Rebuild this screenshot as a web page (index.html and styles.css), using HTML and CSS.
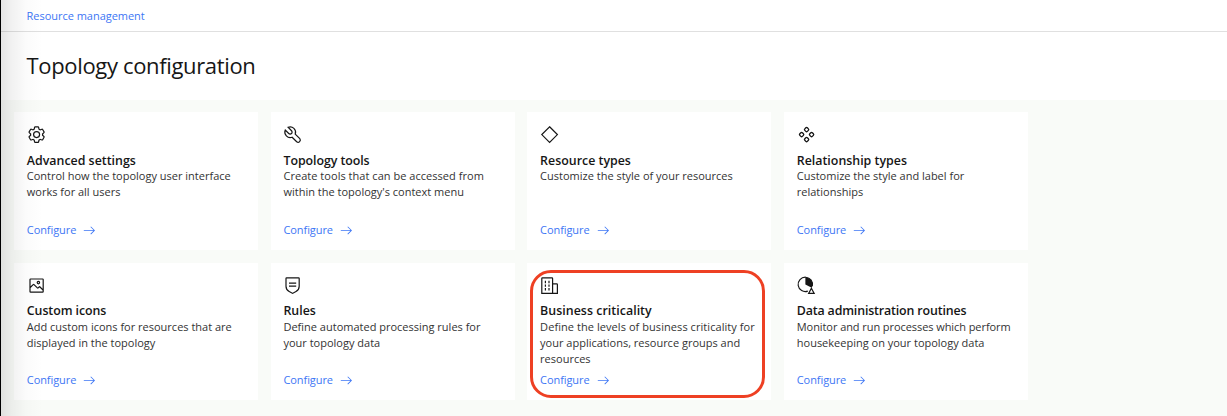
FILE: index.html
```
<!DOCTYPE html>
<html lang="en">
<head>
<meta charset="utf-8">
<title>Topology configuration</title>
<link rel="stylesheet" href="styles.css">
</head>
<body>
<svg class="defs" width="0" height="0"><defs><symbol id="arrow" viewBox="0 0 16 16"><path d="M9.3 3.7 13.1 7.5H1v1h12.1L9.3 12.3 10 13l5-5-5-5z"/></symbol></defs></svg>
<div class="page">
<header class="header">
<nav class="crumbs"><a class="link crumb">Resource management</a></nav>
<h1 class="title">Topology configuration</h1>
</header>
<main class="grid">
<section class="card">
<svg class="icon" viewBox="0 0 32 32"><path d="M27,16.76c0-.25,0-.5,0-.76s0-.51,0-.77l1.92-1.68A2,2,0,0,0,29.3,11L26.94,7a2,2,0,0,0-1.73-1,2,2,0,0,0-.64.1l-2.43.82a11.35,11.35,0,0,0-1.31-.75l-.51-2.52a2,2,0,0,0-2-1.61H13.64a2,2,0,0,0-2,1.61l-.51,2.52a11.48,11.48,0,0,0-1.32.75L7.43,6.06A2,2,0,0,0,6.79,6,2,2,0,0,0,5.06,7L2.7,11a2,2,0,0,0,.41,2.51L5,15.24c0,.25,0,.5,0,.76s0,.51,0,.77L3.11,18.45A2,2,0,0,0,2.7,21L5.06,25a2,2,0,0,0,1.73,1,2,2,0,0,0,.64-.1l2.43-.82a11.35,11.35,0,0,0,1.31.75l.51,2.52a2,2,0,0,0,2,1.61h4.72a2,2,0,0,0,2-1.61l.51-2.52a11.48,11.48,0,0,0,1.32-.75l2.42.82a2,2,0,0,0,.64.1,2,2,0,0,0,1.73-1L29.3,21a2,2,0,0,0-.41-2.51ZM25.21,24l-3.43-1.16a8.86,8.86,0,0,1-2.71,1.57L18.36,28H13.64l-.71-3.55a9.36,9.36,0,0,1-2.7-1.57L6.79,24,4.43,20l2.72-2.4a8.9,8.9,0,0,1,0-3.13L4.43,12,6.79,8l3.43,1.16a8.86,8.86,0,0,1,2.71-1.57L13.64,4h4.72l.71,3.55a9.36,9.36,0,0,1,2.7,1.57L25.21,8,27.57,12l-2.72,2.4a8.9,8.9,0,0,1,0,3.13L27.57,20Z"/><circle class="line" cx="16" cy="16" r="5"/></svg>
<h2 class="name">Advanced settings</h2>
<p class="text"><span class="row">Control how the topology user interface</span> <span class="row">works for all users</span></p>
<a class="link action"><span class="label">Configure</span><svg class="arrow"><use href="#arrow"/></svg></a>
</section>
<section class="card">
<svg class="icon" viewBox="0 0 32 32"><path class="line" d="M8.5 3.8A9 9 0 0 1 20.4 15.2L28 22.8a3.7 3.7 0 0 1-5.2 5.2L15.2 20.4A9 9 0 0 1 3.8 8.5L9.6 14.2A3.25 3.25 0 0 0 14.2 9.6Z"/></svg>
<h2 class="name snug">Topology tools</h2>
<p class="text"><span class="row loose">Create tools that can be accessed from</span> <span class="row">within the topology's context menu</span></p>
<a class="link action"><span class="label">Configure</span><svg class="arrow"><use href="#arrow"/></svg></a>
</section>
<section class="card">
<svg class="icon" viewBox="0 0 32 32"><path class="line" d="M16 3 29 16 16 29 3 16Z"/></svg>
<h2 class="name">Resource types</h2>
<p class="text"><span class="row">Customize the style of your resources</span></p>
<a class="link action"><span class="label">Configure</span><svg class="arrow"><use href="#arrow"/></svg></a>
</section>
<section class="card">
<svg class="icon" viewBox="0 0 32 32"><g class="line nodes"><rect x="13" y="4.7" width="6" height="6" rx="1.8" transform="rotate(45 16 7.7)"/><rect x="4.7" y="13" width="6" height="6" rx="1.8" transform="rotate(45 7.7 16)"/><rect x="21.3" y="13" width="6" height="6" rx="1.8" transform="rotate(45 24.3 16)"/><rect x="13" y="21.3" width="6" height="6" rx="1.8" transform="rotate(45 16 24.3)"/></g></svg>
<h2 class="name">Relationship types</h2>
<p class="text"><span class="row">Customize the style and label for</span> <span class="row">relationships</span></p>
<a class="link action"><span class="label">Configure</span><svg class="arrow"><use href="#arrow"/></svg></a>
</section>
<section class="card lower">
<svg class="icon" viewBox="0 0 32 32"><path d="M19 14a3 3 0 1 0-3-3 3 3 0 0 0 3 3Zm0-4a1 1 0 1 1-1 1 1 1 0 0 1 1-1Z"/><path d="M26 4H6A2 2 0 0 0 4 6V26a2 2 0 0 0 2 2H26a2 2 0 0 0 2-2V6A2 2 0 0 0 26 4Zm0 22H6V20l5-5 5.59 5.59a2 2 0 0 0 2.82 0L21 19l5 5Zm0-4.83-3.59-3.59a2 2 0 0 0-2.82 0L18 19.17l-5.59-5.59a2 2 0 0 0-2.82 0L6 17.17V6H26Z"/></svg>
<h2 class="name snug">Custom icons</h2>
<p class="text"><span class="row">Add custom icons for resources that are</span> <span class="row">displayed in the topology</span></p>
<a class="link action"><span class="label">Configure</span><svg class="arrow"><use href="#arrow"/></svg></a>
</section>
<section class="card lower">
<svg class="icon" viewBox="0 0 32 32"><path d="M10 16h12v2H10zM10 11h12v2H10zM16 30l-6.18-3.3A10.98 10.98 0 0 1 4 17V4A2 2 0 0 1 6 2H26A2 2 0 0 1 28 4V17a10.98 10.98 0 0 1-5.82 9.7ZM6 4V17a8.99 8.99 0 0 0 4.77 7.93L16 27.73l5.23-2.79A8.99 8.99 0 0 0 26 17V4Z" fill-rule="evenodd"/></svg>
<h2 class="name">Rules</h2>
<p class="text"><span class="row">Define automated processing rules for</span> <span class="row">your topology data</span></p>
<a class="link action"><span class="label">Configure</span><svg class="arrow"><use href="#arrow"/></svg></a>
</section>
<section class="card lower marked">
<svg class="icon" viewBox="0 0 32 32"><path d="M8 8h2v4H8zM8 14h2v4H8zM14 8h2v4h-2zM14 14h2v4h-2zM8 20h2v4H8zM14 20h2v4h-2z"/><path d="M30 14a2 2 0 0 0-2-2h-6V4a2 2 0 0 0-2-2H4a2 2 0 0 0-2 2v26h28ZM4 4h16v24H4Zm18 24V14h6v14Z" fill-rule="evenodd"/></svg>
<h2 class="name loose">Business criticality</h2>
<p class="text"><span class="row wide">Define the levels of business criticality for</span> <span class="row">your applications, resource groups and</span> <span class="row">resources</span></p>
<a class="link action"><span class="label">Configure</span><svg class="arrow"><use href="#arrow"/></svg></a>
</section>
<section class="card lower">
<svg class="icon" viewBox="0 0 32 32"><path class="line" d="M18 25.3A12 12 0 1 1 25.5 17"/><path d="M14 2A12 12 0 0 1 24.5 19.5L14 14Z"/><path class="line" d="M24 20.5 28.6 29H19.4Z"/></svg>
<h2 class="name tight">Data administration routines</h2>
<p class="text"><span class="row snug">Monitor and run processes which perform</span> <span class="row">housekeeping on your topology data</span></p>
<a class="link action"><span class="label">Configure</span><svg class="arrow"><use href="#arrow"/></svg></a>
</section>
</main>
</div>
</body>
</html>
```
FILE: styles.css
```
*, *::before, *::after { box-sizing: border-box; }
body { margin: 0; font-family: "Open Sans", sans-serif; color: #161616; }
.defs { display: block; }
.page { position: relative; height: 416px; overflow: hidden; border-left: 1px solid #000; background: #f9fbf8; }
.page::after { content: ""; position: absolute; inset: 0 auto 0 0; width: 42px; background: linear-gradient(90deg, rgba(0,0,0,.1), rgba(0,0,0,.055) 25%, rgba(0,0,0,.015) 60%, transparent); pointer-events: none; }
.header { height: 100px; background: #fff; }
.crumbs { height: 32px; padding-left: 25.6px; border-bottom: 1px solid #e0e0e0; display: flex; align-items: center; }
.crumb { letter-spacing: -.03px; }
.title { margin: 0; padding-left: 25.6px; height: 68px; line-height: 66px; font-size: 22px; font-weight: 400; letter-spacing: -.35px; white-space: nowrap; }
.grid { display: grid; grid-template-columns: repeat(4, 244px); grid-template-rows: 138px 137px; gap: 13px 12.67px; padding: 12px 0 0 13px; }
.card { position: relative; background: #fff; padding: 12.8px 0 12px 12.8px; display: flex; flex-direction: column; }
.icon { width: 19.2px; height: 19.2px; fill: #161616; flex: none; }
.line { fill: none; stroke: #161616; stroke-width: 2; }
.nodes { stroke-width: 2.2; }
.name { margin: 8px 0 0; font-size: 12.4px; line-height: 18px; font-weight: 600; white-space: nowrap; }
.text { margin: -1.6px 0 0; font-size: 11px; line-height: 16px; color: #333; white-space: nowrap; }
.lower .name { margin-top: 7px; }
.lower .text { margin-top: -.6px; }
.row { display: block; }
.loose { letter-spacing: .035px; }
.wide { letter-spacing: .065px; }
.snug { letter-spacing: -.07px; }
.tight { letter-spacing: -.15px; }
.link { color: #3d76f5; font-size: 11px; line-height: 16px; }
.label { letter-spacing: -.08px; }
.action { margin-top: auto; display: flex; align-items: center; gap: 7px; }
.arrow { width: 12.8px; height: 12.8px; fill: currentColor; }
.marked::after { content: ""; position: absolute; left: 3px; top: 7px; width: 235px; height: 128px; border: 3px solid #ee4023; border-radius: 21px; }
```
